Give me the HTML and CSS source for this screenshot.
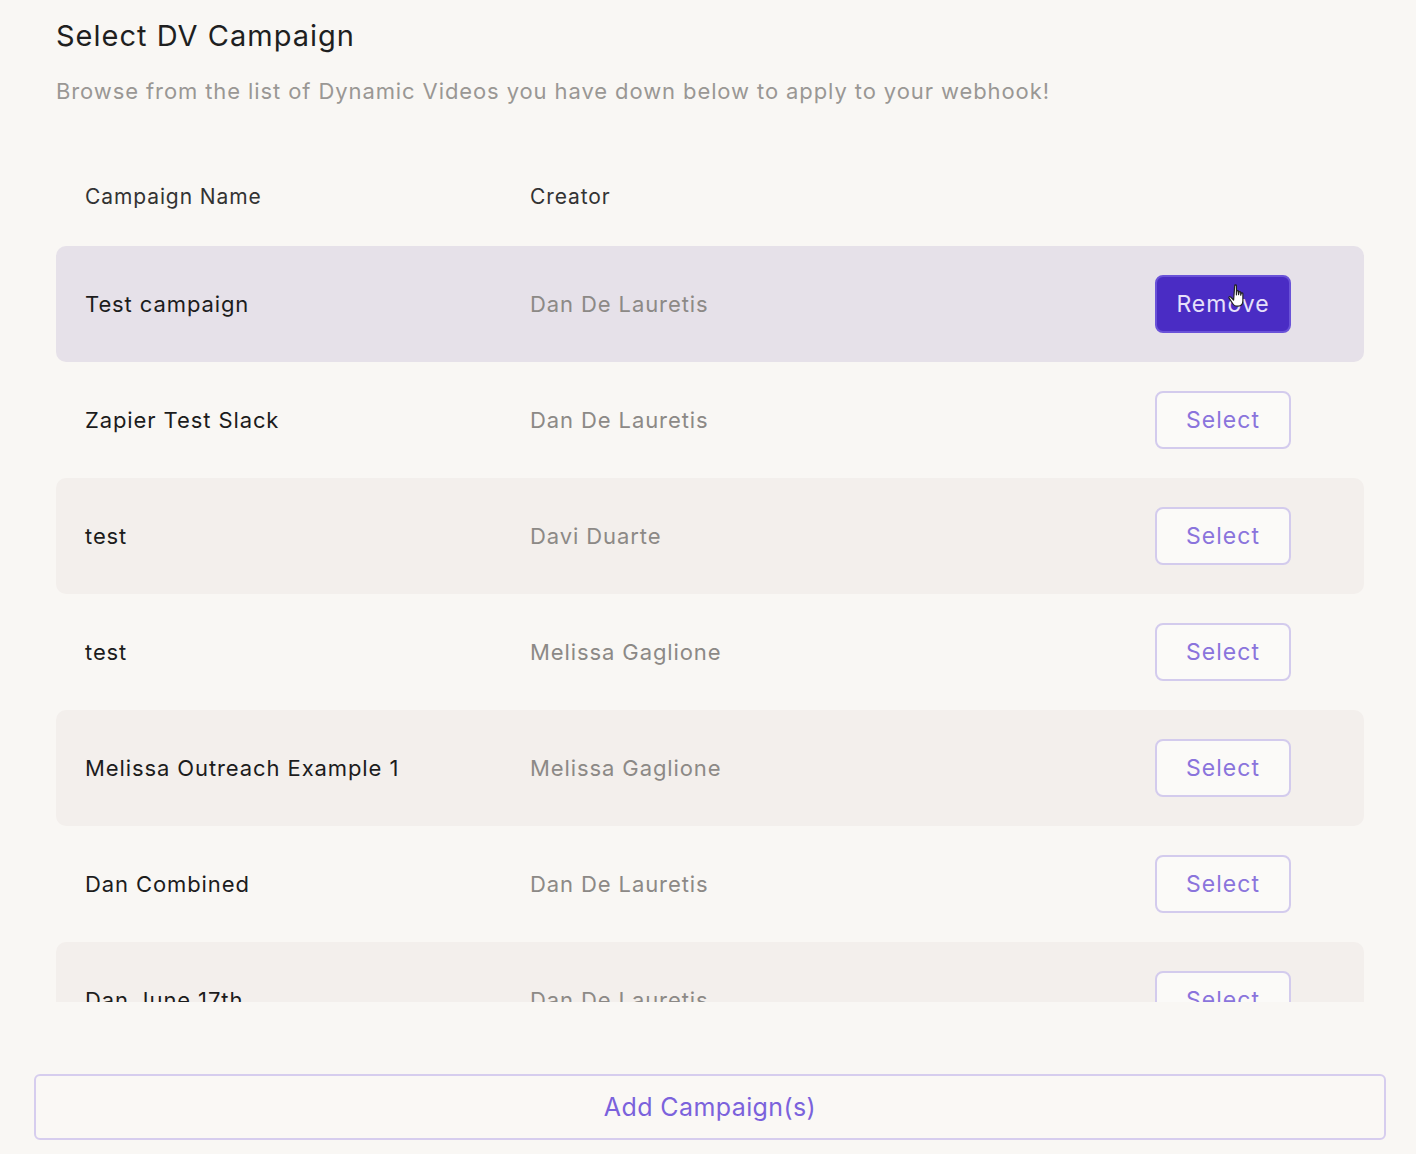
FILE: index.html
```html
<!DOCTYPE html>
<html lang="en">

<head>
  <meta charset="UTF-8">
  <title>Select DV Campaign</title>
  <link rel="stylesheet" href="styles.css">
</head>

<body>
  <div id="panel">
    <div class="intro">
      <h1>Select DV Campaign</h1>
      <p class="subtitle">Browse from the list of Dynamic Videos you have down below to apply to your webhook!</p>
    </div>

    <div class="table">
      <div class="table-head">
        <span class="col-name">Campaign Name</span>
        <span class="col-creator">Creator</span>
      </div>

      <div class="table-body">
        <div class="row selected">
          <span class="col-name">Test campaign</span>
          <span class="col-creator">Dan De Lauretis</span>
          <button class="btn-remove">Remove
            <svg class="cursor" width="24" height="28" viewBox="0 0 22 26">
              <path d="M7 2.5c0-1 1.6-1 1.6 0V11l0.4-3.2c0.2-1 1.6-0.9 1.6 0.1v3l0.4-2.2c0.2-1 1.6-0.9 1.6 0.1v2.6l0.4-1.6c0.3-0.9 1.6-0.7 1.6 0.2v6.5c0 2.8-1.6 5-4.4 5H8.6c-1.4 0-2.4-0.8-3.2-2L1.8 14c-0.6-1 0.7-1.9 1.5-1l2.7 2.8z" fill="#fff" stroke="#222" stroke-width="1.1" stroke-linejoin="round"/>
            </svg>
          </button>
        </div>
        <div class="row">
          <span class="col-name">Zapier Test Slack</span>
          <span class="col-creator">Dan De Lauretis</span>
          <button class="btn-select">Select</button>
        </div>
        <div class="row shaded">
          <span class="col-name">test</span>
          <span class="col-creator">Davi Duarte</span>
          <button class="btn-select">Select</button>
        </div>
        <div class="row">
          <span class="col-name">test</span>
          <span class="col-creator">Melissa Gaglione</span>
          <button class="btn-select">Select</button>
        </div>
        <div class="row shaded">
          <span class="col-name">Melissa Outreach Example 1</span>
          <span class="col-creator">Melissa Gaglione</span>
          <button class="btn-select">Select</button>
        </div>
        <div class="row">
          <span class="col-name">Dan Combined</span>
          <span class="col-creator">Dan De Lauretis</span>
          <button class="btn-select">Select</button>
        </div>
        <div class="row shaded">
          <span class="col-name">Dan June 17th</span>
          <span class="col-creator">Dan De Lauretis</span>
          <button class="btn-select">Select</button>
        </div>
      </div>
    </div>

    <button class="btn-add">Add Campaign(s)</button>
  </div>
</body>

</html>
```

FILE: styles.css
```css
body {
  background-color: #f9f7f4;
  color: #222;
  font-family: 'Inter', 'Liberation Sans', sans-serif;
  margin: 0;
}

#panel {
  padding: 16px 30px 0 34px;
  width: 1352px;
}

.intro {
  padding-left: 22px;
}

h1 {
  font-size: 29px;
  font-weight: 400;
  line-height: 40px;
  margin: 0;
  color: #1f1f1f;
  letter-spacing: 1px;
}

.subtitle {
  font-size: 22px;
  color: #9a9794;
  margin: 20px 0 0 0;
  line-height: 30px;
  letter-spacing: 0.9px;
}

.table {
  margin: 0 22px 0 22px;
}

.table-head {
  display: flex;
  align-items: center;
  height: 88px;
  margin-top: 46px;
  padding: 0 0 6px 29px;
  font-size: 21px;
  color: #333;
  letter-spacing: 0.9px;
}

.table-body {
  height: 756px;
  overflow: hidden;
}

.col-name {
  width: 445px;
}

.col-creator {
  flex: 1;
}

.row {
  display: flex;
  align-items: center;
  height: 116px;
  padding: 0 73px 0 29px;
  border-radius: 10px;
  font-size: 22px;
  letter-spacing: 0.9px;
}

.row .col-name {
  color: #1c1c1c;
}

.row .col-creator {
  color: #8c8986;
}

.row.selected {
  background-color: #e6e1e9;
}

.row.shaded {
  background-color: #f3efec;
}

button {
  font-family: inherit;
  cursor: pointer;
}

.btn-remove,
.btn-select {
  width: 136px;
  height: 58px;
  border-radius: 8px;
  font-size: 23px;
  letter-spacing: 1px;
}

.btn-remove {
  position: relative;
  background-color: #4a2cc4;
  border: 2px solid #6a52d8;
  color: #e6e0fa;
}

.cursor {
  position: absolute;
  left: 70px;
  top: 6px;
}

.btn-select {
  background-color: #fbfaf8;
  border: 2px solid #d3cbed;
  color: #8a74dc;
}

.btn-add {
  display: block;
  width: 100%;
  height: 66px;
  margin-top: 72px;
  background-color: #faf8f5;
  border: 2px solid #d6cdee;
  border-radius: 6px;
  font-size: 25px;
  color: #7b62dc;
  letter-spacing: 0.4px;
}
```
